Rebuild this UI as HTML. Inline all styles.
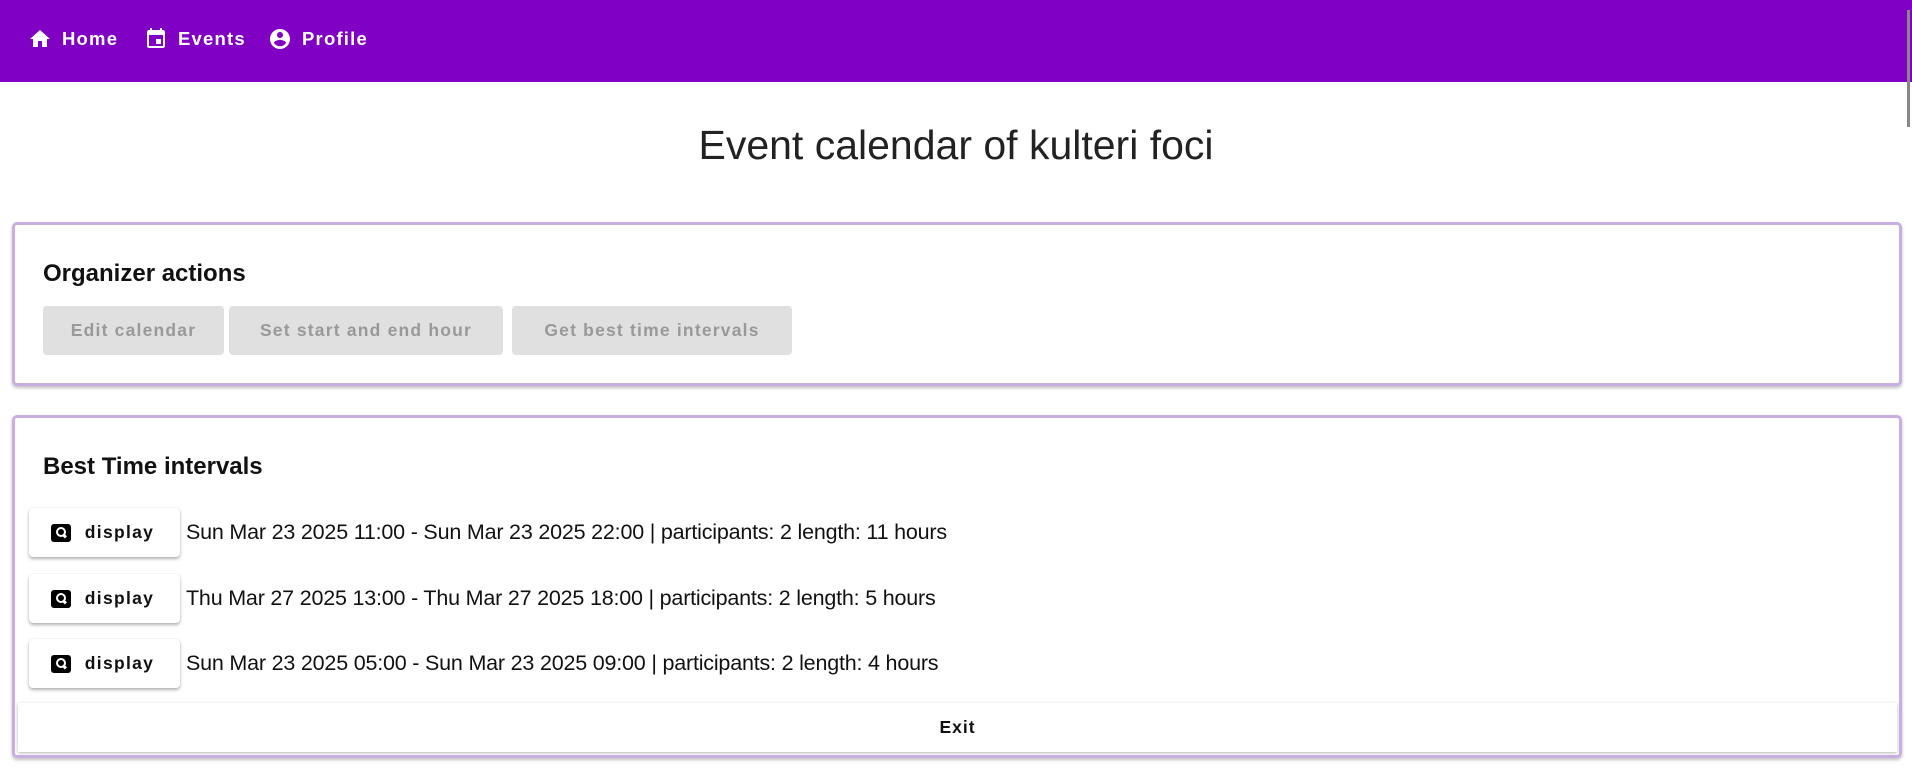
<!DOCTYPE html>
<html><head><meta charset="utf-8"><style>
*{box-sizing:border-box;margin:0;padding:0}
body{width:1912px;height:771px;overflow:hidden;background:#fff;font-family:"Liberation Sans",sans-serif;position:relative}
.nav{position:absolute;left:0;top:0;width:1912px;height:82px;background:#8000c4}
.ni{position:absolute;top:27px;color:#fff;font-weight:bold;font-size:18.5px;letter-spacing:1.2px;display:flex;align-items:center;gap:10px}
.ni svg{width:24px;height:24px;fill:#fff}
.title{position:absolute;top:122px;width:1912px;text-align:center;font-size:41px;font-weight:300;color:#222}
.card{position:absolute;left:12px;width:1890px;border:3px solid #c9aee4;border-radius:5px;box-shadow:0 2px 3px rgba(0,0,0,.25)}
h2{position:absolute;font-size:24px;font-weight:bold;color:#111}
.gb{position:absolute;top:306px;height:49px;background:#e0e0e0;border-radius:4px;color:#999;font-weight:bold;font-size:17.5px;letter-spacing:1.2px;display:flex;align-items:center;justify-content:center}
.row{position:absolute;left:29px;height:49px;display:flex;align-items:center}
.db{width:151px;height:49px;border-radius:4px;box-shadow:0 2px 3px rgba(0,0,0,.3),0 0 1px rgba(0,0,0,.15);display:flex;align-items:center;justify-content:center;gap:14px;font-weight:bold;font-size:17.5px;letter-spacing:1.3px;color:#111;background:#fff;padding-right:4px}
.ic{width:20px;height:18px;background:#000;border-radius:3px;position:relative}
.ic:before{content:"";position:absolute;left:5px;top:3px;width:6px;height:6px;border:2px solid #fff;border-radius:50%}
.ic:after{content:"";position:absolute;left:12px;top:10px;width:3px;height:4px;background:#fff;transform:rotate(-45deg)}
.tx{margin-left:6px;font-size:21.5px;color:#111;letter-spacing:-0.2px}
.exit{position:absolute;left:18px;top:703px;width:1879px;height:49px;box-shadow:0 1px 3px rgba(0,0,0,.3);display:flex;align-items:center;justify-content:center;font-weight:bold;font-size:17.5px;letter-spacing:1px;color:#111;background:#fff}
</style></head><body>
<div class="nav">
<div class="ni" style="left:28px"><svg viewBox="0 0 24 24"><path d="M10 20v-6h4v6h5v-8h3L12 3 2 12h3v8z"/></svg>Home</div>
<div class="ni" style="left:144px"><svg viewBox="0 0 24 24"><path d="M17 12h-5v5h5v-5zM16 1v2H8V1H6v2H5c-1.1 0-2 .9-2 2v14c0 1.1.9 2 2 2h14c1.1 0 2-.9 2-2V5c0-1.1-.9-2-2-2h-1V1h-2zm3 18H5V8h14v11z"/></svg>Events</div>
<div class="ni" style="left:268px"><svg viewBox="0 0 24 24"><path d="M12 2C6.48 2 2 6.48 2 12s4.48 10 10 10 10-4.480 10-10S17.52 2 12 2zm0 3c1.66 0 3 1.34 3 3s-1.34 3-3 3-3-1.34-3-3 1.34-3 3-3zm0 14.2c-2.5 0-4.71-1.28-6-3.220.03-1.99 4-3.08 6-3.08 1.99 0 5.970 1.09 6 3.08-1.29 1.94-3.5 3.22-6 3.22z"/></svg>Profile</div>
</div>
<div style="position:absolute;left:1907px;top:10px;width:3px;height:117px;background:#888"></div>
<div class="title">Event calendar of kulteri foci</div>
<div class="card" style="top:222px;height:164px"></div>
<h2 style="left:43px;top:260px">Organizer actions</h2>
<div class="gb" style="left:43px;width:181px">Edit calendar</div>
<div class="gb" style="left:229px;width:274px">Set start and end hour</div>
<div class="gb" style="left:512px;width:280px">Get best time intervals</div>
<div class="card" style="top:415px;height:343px"></div>
<h2 style="left:43px;top:453px">Best Time intervals</h2>
<div class="row" style="top:508px"><div class="db"><span class="ic"></span>display</div><span class="tx">Sun Mar 23 2025 11:00 - Sun Mar 23 2025 22:00 | participants: 2 length: 11 hours</span></div>
<div class="row" style="top:574px"><div class="db"><span class="ic"></span>display</div><span class="tx">Thu Mar 27 2025 13:00 - Thu Mar 27 2025 18:00 | participants: 2 length: 5 hours</span></div>
<div class="row" style="top:639px"><div class="db"><span class="ic"></span>display</div><span class="tx">Sun Mar 23 2025 05:00 - Sun Mar 23 2025 09:00 | participants: 2 length: 4 hours</span></div>
<div class="exit">Exit</div>
</body></html>
